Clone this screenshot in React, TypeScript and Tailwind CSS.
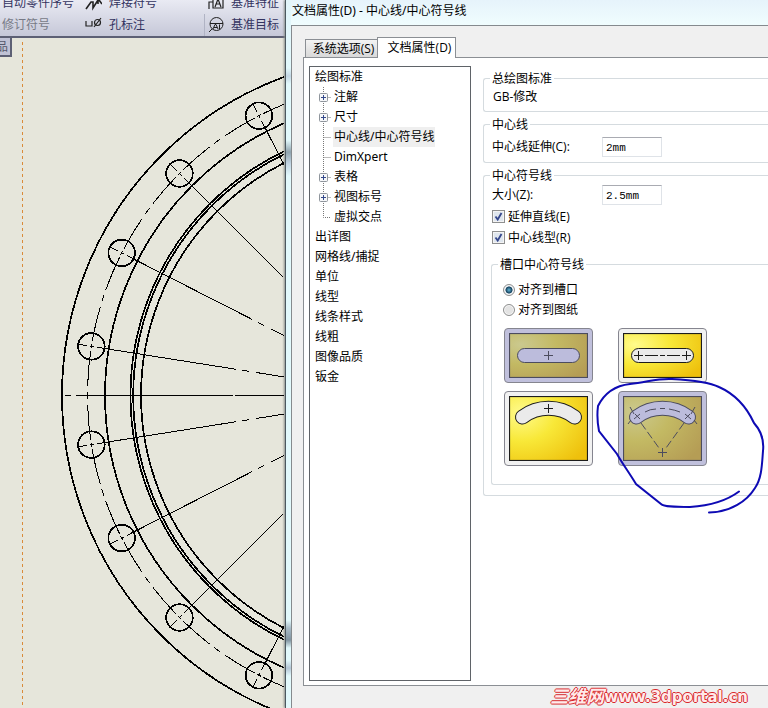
import React from 'react';
import clsx from 'clsx';

interface TreeNode {
  label: string;
  expandable?: boolean;
  selected?: boolean;
}

interface GroupProps {
  title: string;
  className?: string;
  children: React.ReactNode;
}

interface SlotButtonProps {
  label: string;
  active?: boolean;
  height: number;
  children: React.ReactNode;
}

const standardNodes: TreeNode[] = [
  { label: '注解', expandable: true },
  { label: '尺寸', expandable: true },
  { label: '中心线/中心符号线', selected: true },
  { label: 'DimXpert' },
  { label: '表格', expandable: true },
  { label: '视图标号', expandable: true },
  { label: '虚拟交点' },
];

const rootNodes = ['出详图', '网格线/捕捉', '单位', '线型', '线条样式', '线粗', '图像品质', '钣金'];

// flange geometry
const CX = 401.5;
const CY = 357.5;
const BOLT_R = 314;
const holeAngles = [-63, -45, -27, -9, 9, 27, 45, 63];

const polar = (r: number, deg: number) => {
  const a = (deg * Math.PI) / 180;
  return { x: CX - r * Math.cos(a), y: CY + r * Math.sin(a) };
};

const Flange = () => (
  <svg
    className="block h-[670px] w-[284px] shrink-0"
    viewBox="0 0 284 670"
    fill="none"
    stroke="#000"
    shapeRendering="crispEdges"
  >
    <line x1="22.5" y1="4" x2="22.5" y2="670" stroke="#d98b3a" strokeDasharray="3 3" />
    <circle cx={CX} cy={CY} r="339.5" strokeWidth="1.7" />
    <circle cx={CX} cy={CY} r="296.5" strokeWidth="1.7" />
    <circle cx={CX} cy={CY} r="271" strokeWidth="1.7" />
    <circle cx={CX} cy={CY} r="268.3" strokeWidth="1.7" />
    <circle cx={CX} cy={CY} r="260.5" strokeWidth="1.7" />
    {holeAngles.map((deg) => {
      const hole = polar(BOLT_R, deg);
      const from = polar(328, deg);
      const to = polar(60, deg);
      const a1 = polar(BOLT_R, deg - 9);
      const a2 = polar(BOLT_R, deg + 9);
      return (
        <g key={deg}>
          <circle cx={hole.x} cy={hole.y} r="13.3" strokeWidth="1.7" />
          <line x1={from.x} y1={from.y} x2={to.x} y2={to.y} strokeDasharray="10 3 4 3 140 7 7 7 200" />
          <path
            d={`M${a1.x} ${a1.y}A${BOLT_R} ${BOLT_R} 0 0 0 ${a2.x} ${a2.y}`}
            strokeDasharray="3.3 6 35 3 4 3 35 6 3.3 20"
          />
        </g>
      );
    })}
    <path d="M65 357.5h6M76 357.5h157M235 357.5h49" />
  </svg>
);

const ToolLabel = ({ x, children, muted }: { x: string; children: React.ReactNode; muted?: boolean }) => (
  <span className={clsx('shrink-0 whitespace-nowrap', x, muted ? 'text-[#777a86]' : 'text-[#33335f]')}>{children}</span>
);

const Ribbon = () => (
  <div className="flex h-[38px] shrink-0 flex-col justify-end overflow-hidden border-b-2 border-[#5d6074] bg-linear-to-b from-[#e9eaf3] to-[#c6c8d8] text-xs leading-[22px]">
    <div className="flex h-[22px] shrink-0 items-center pl-0.5">
      <ToolLabel x="w-[82px]">自动零件序号</ToolLabel>
      <svg className="mr-[7px] h-4 w-[18px] shrink-0" viewBox="0 0 18 16" fill="none" stroke="#222" strokeWidth="1.6">
        <path d="M2 14L7 7h2v6L14 5v4M15 5l3 4" />
      </svg>
      <ToolLabel x="w-[99px]">焊接符号</ToolLabel>
      <svg className="mr-[7px] h-4 w-4 shrink-0" viewBox="0 0 16 16" fill="none" stroke="#222" strokeWidth="1.2">
        <path d="M1 14V7h4M5 2h10v11H5zM7 12l3-8 3 8M8 9h4" />
      </svg>
      <ToolLabel x="w-12">基准特征</ToolLabel>
    </div>
    <div className="flex h-[22px] shrink-0 items-center pl-0.5">
      <ToolLabel x="w-[82px]" muted>修订符号</ToolLabel>
      <svg className="mr-[7px] h-4 w-[18px] shrink-0" viewBox="0 0 18 16" fill="none" stroke="#222" strokeWidth="1.2">
        <path d="M2 4v5h6V4M10 10l7-9" />
        <circle cx="13.5" cy="5.5" r="3" />
      </svg>
      <ToolLabel x="w-[95px]">孔标注</ToolLabel>
      <span className="mr-[3px] h-[22px] w-px shrink-0 bg-[#b0b3c4]" />
      <svg className="mr-[7px] h-4 w-4 shrink-0" viewBox="0 0 16 16" fill="none" stroke="#222">
        <circle cx="8.5" cy="7" r="6.5" />
        <path d="M2 6.500h13M5 12l2-4.500h1l2 4.500M6 10.500h3M11.500 7.500V12M4 12L1 15" />
      </svg>
      <ToolLabel x="w-12">基准目标</ToolLabel>
    </div>
  </div>
);

const NodeLines = ({ expandable, last }: { expandable?: boolean; last?: boolean }) => (
  <svg className="h-5 w-[18px] shrink-0" viewBox="0 0 18 20" fill="none">
    <path d={last ? 'M8.500 0V10.500H16' : 'M8.500 0V20M8.500 10.500H16'} stroke="#777" strokeDasharray="1 1" />
    {expandable && (
      <>
        <rect x="4.500" y="6.500" width="8" height="8" rx="1" fill="#f6f7f9" stroke="#8f959c" />
        <path d="M6 10.500h5M8.500 8v5" stroke="#34498a" />
      </>
    )}
  </svg>
);

const Group: React.FC<GroupProps> = ({ title, className, children }) => (
  <fieldset className={clsx('rounded-l-[3px] border border-r-0 border-[#d5dbdf]', className)}>
    <legend className="ml-1.5 h-4 px-0.5 leading-[18px]">{title}</legend>
    {children}
  </fieldset>
);

const SlotButton: React.FC<SlotButtonProps> = ({ label, active = false, height, children }) => {
  const id = React.useId();
  return (
    <button
      type="button"
      aria-label={label}
      aria-pressed={active}
      className={clsx(
        'flex rounded border border-[#85858f] p-1',
        active ? 'bg-[#c0c0dc]' : 'bg-[#f1f1f1]',
      )}
    >
      <svg className="w-full" viewBox={`0 0 79 ${height}`} fill="none" stroke={active ? '#4c4c5e' : '#1c1c1c'}>
        <defs>
          <radialGradient id={id} cx="0.15" cy="0.25" r="1">
            <stop offset="0" stopColor={active ? '#cbc98f' : '#fffb8c'} />
            <stop offset="0.45" stopColor={active ? '#c3b963' : '#f8e838'} />
            <stop offset="1" stopColor={active ? '#b59d55' : '#eec00c'} />
          </radialGradient>
        </defs>
        <rect x="0.500" y="0.500" width="78" height={height - 1} fill={`url(#${id})`} strokeWidth="1.200" />
        {children}
      </svg>
    </button>
  );
};

const StraightSlot = ({ fill }: { fill: string }) => <rect x="8.500" y="15.500" width="62" height="14" rx="7" fill={fill} />;

const ArcSlot = ({ fill }: { fill: string }) => (
  <>
    <path d="M13.500 21A43.500 43.500 0 0 1 65.500 21" strokeWidth="15" strokeLinecap="round" />
    <path d="M13.500 21A43.500 43.500 0 0 1 65.500 21" stroke={fill} strokeWidth="13" strokeLinecap="round" />
  </>
);

const OptionsTree = () => (
  <nav className='w-[162px] shrink-0 border border-[#5f6368] bg-white pl-[5px] font-["Noto_Sans","Noto_Sans_CJK_SC",sans-serif] leading-5'>
    <ul>
      <li>
        <a href="#standard" className="block">绘图标准</a>
        <ul>
          {standardNodes.map((node, idx) => (
            <li key={node.label} className="flex h-5 items-center">
              <NodeLines expandable={node.expandable} last={idx === standardNodes.length - 1} />
              <a href="#node" className={clsx('px-px', node.selected && 'bg-[#efefef]')}>
                {node.label}
              </a>
            </li>
          ))}
        </ul>
      </li>
      {rootNodes.map((label) => (
        <li key={label}>
          <a href="#node" className="block">{label}</a>
        </li>
      ))}
    </ul>
  </nav>
);

const inputStyle =
  'h-5 w-[60px] border border-[#dfe3e8] border-t-[#a9abb2] bg-white pt-px pl-[3px] font-["Liberation_Mono",monospace] text-[11px]';

const CheckRow = ({ label }: { label: string }) => (
  <label className="flex h-[21px] items-center gap-[3px] pl-2">
    <span className="grid size-[13px]">
      <input
        type="checkbox"
        defaultChecked
        className="peer col-start-1 row-start-1 size-[13px] appearance-none border border-[#8e8f8f] bg-[#dfe6ee] shadow-[inset_0_0_0_1px_#f4f4f4]"
      />
      <svg className="pointer-events-none invisible col-start-1 row-start-1 size-[13px] peer-checked:visible" viewBox="0 0 13 13" fill="none">
        <path d="M3.500 6.500l2.200 3L9.500 3" stroke="#35478c" strokeWidth="1.800" />
      </svg>
    </span>
    {label}
  </label>
);

const RadioRow = ({ label, checked }: { label: string; checked?: boolean }) => (
  <label className="flex h-5 items-center gap-[3px] pl-[11px]">
    <input
      type="radio"
      name="slot-align"
      defaultChecked={checked}
      className="size-3 appearance-none rounded-full border border-[#8e8f8f] bg-[#e3e3e3] shadow-[inset_0_0_0_1px_#f8f8f8] checked:bg-[radial-gradient(circle,#63b5d5_0,#123f5c_45%,#e9eef2_55%)]"
    />
    {label}
  </label>
);

const PenMark = () => (
  <svg
    className="pointer-events-none absolute top-[47px] left-[86px] h-[140px] w-[178px]"
    viewBox="590 376 178 140"
    fill="none"
    stroke="#0e0ab4"
    strokeWidth="2"
    strokeLinecap="round"
  >
    <path d="M739 492.500C725 503 705 507 690 508C675 508 664 508 661 505L636 485C628 472 622 464 617 455L599 432C597 422 597 415 598 407C603 397 612 387 630 385C648 383 658 379 672 380C690 381 709 383 719 388C737 396 748 411 754 424C763 434 764 443 763 452C762 464 762 479 755 489C747 502 731 513 709 513.500" />
  </svg>
);

const App = () => {
  return (
    <div className='flex min-h-screen overflow-hidden bg-[#e6e6db] font-["Open_Sans","Noto_Sans_CJK_SC",sans-serif] text-xs text-black'>
      <main className="flex w-[285px] shrink-0 flex-col">
        <Ribbon />
        <div className="relative h-[670px] overflow-hidden">
          <Flange />
          <span className="absolute top-0 left-0 flex h-[19px] w-3 items-center justify-end overflow-hidden border-r-2 border-b-2 border-[#5d6074] bg-[#c0c2d5] pr-0.5 text-[#55586b]">
            品
          </span>
        </div>
      </main>

      <section className="flex min-w-0 flex-1 flex-col border-l border-[#4c5960] bg-[linear-gradient(#e2f5fa_0,#e2f9fc_68px,#c3d6e4_76px,#e2f9fc_84px,#e2f9fc_140px,#8fa3ae_152px,#c3d6e4_164px,#e2f9fc_176px,#e2f9fc_620px,#a9bcc8_628px,#8093a0_640px,#e2f9fc_648px,#e2f9fc_660px,#b4c6d6_668px,#e2f9fc_676px)] pl-[5px] shadow-[-1px_0_2px_#8a8f8b]">
        <h1 className='h-[25px] bg-linear-to-b from-[#e6f3fb] to-[#f0fdfe] pl-px font-["Noto_Sans","Noto_Sans_CJK_SC",sans-serif] leading-[22px] whitespace-nowrap'>
          文档属性(D) - 中心线/中心符号线
        </h1>
        <div className="flex flex-1 flex-col border-t border-l border-[#858a8e] bg-[#f0f0f0] pt-[11px] pl-[11px]">
          <div className="flex items-end pl-0.5" role="tablist">
            <button
              type="button"
              role="tab"
              aria-selected="false"
              className="h-[18px] w-[72px] border border-r-0 border-b-0 border-[#8b8f94] bg-linear-to-b from-[#f3f3f3] to-[#d9d9d9] pl-1 leading-[18px] whitespace-nowrap"
            >
              系统选项(S)
            </button>
            <button
              type="button"
              role="tab"
              aria-selected="true"
              className="relative -mb-px h-[21px] w-[79px] border border-b-0 border-[#8b8f94] bg-white pl-1.5 leading-5 whitespace-nowrap"
            >
              文档属性(D)
            </button>
          </div>

          <div className="flex flex-1 border border-r-0 border-[#8b8f94] bg-white pt-2 pb-1 pl-[5px]">
            <OptionsTree />

            <form className="ml-3 flex min-w-0 flex-1 flex-col gap-1 pt-1">
              <Group title="总绘图标准" className="pb-[5px]">
                <p className="h-5 pl-[9px] leading-[22px]">GB-修改</p>
              </Group>

              <Group title="中心线" className="pt-[5px] pb-[5px]">
                <div className="flex items-center pl-2">
                  <label htmlFor="extension" className="w-[110px]">中心线延伸(C):</label>
                  <input id="extension" defaultValue="2mm" className={inputStyle} />
                </div>
              </Group>

              <Group title="中心符号线" className="pt-0.5 pb-2.5">
                <div className="flex items-center pl-2">
                  <label htmlFor="size" className="w-[110px]">大小(Z):</label>
                  <input id="size" defaultValue="2.5mm" className={inputStyle} />
                </div>
                <div className="pt-px">
                  <CheckRow label="延伸直线(E)" />
                  <CheckRow label="中心线型(R)" />
                </div>

                <Group title="槽口中心符号线" className="mt-2 ml-[7px] pt-2 pb-[18px]">
                  <RadioRow label="对齐到槽口" checked />
                  <RadioRow label="对齐到图纸" />
                  <div className="relative mt-2 ml-3 grid w-[203px] grid-cols-[89px_89px] gap-x-[25px] gap-y-2">
                    <SlotButton label="槽口中心" active height={45}>
                      <StraightSlot fill="#bcbcdc" />
                      <path d="M35 22.500h9M39.500 18v9" />
                    </SlotButton>
                    <SlotButton label="槽口端点" height={45}>
                      <StraightSlot fill="#ebebeb" />
                      <path d="M11 22.500h9M15.500 18v9M59 22.500h9M63.500 18v9M22 22.500h13M37 22.500h5M44 22.500h13" />
                    </SlotButton>
                    <SlotButton label="圆弧槽口中心" height={65}>
                      <ArcSlot fill="#ebebeb" />
                      <path d="M35 12.500h9M39.500 8v9" />
                    </SlotButton>
                    <SlotButton label="圆弧槽口端点" active height={65}>
                      <ArcSlot fill="#bcbcdc" />
                      <path d="M22 16Q27 13 33 13M37 12.500h5M46 13Q52 14 57 16" />
                      <path d="M7 11l4 7M11 23l6-5M12 18l5 5M5 28l3-4M72 11l-4 7M68 23l-6-5M67 18l-5 5M74 28l-3-4" />
                      <path d="M18 27L36 52M61 27L43 52" strokeDasharray="8 3" />
                      <path d="M35 56.500h9M39.500 52v9" />
                    </SlotButton>
                    <PenMark />
                  </div>
                </Group>
              </Group>
            </form>
          </div>

          <footer className="flex h-[22px] justify-end pr-5">
            <a
              href="#portal"
              className='flex items-center font-["DejaVu_Sans","Noto_Sans_CJK_SC",sans-serif] text-[15px] leading-5 font-bold whitespace-nowrap text-[#ffeaea] [text-shadow:1px_0_#d8282c,-1px_0_#d8282c,0_1px_#d8282c,0_-1px_#d8282c]'
            >
              <span className="text-[18px] italic">三维网</span>
              www.3dportal.cn
            </a>
          </footer>
        </div>
      </section>
    </div>
  );
};

export default App;
